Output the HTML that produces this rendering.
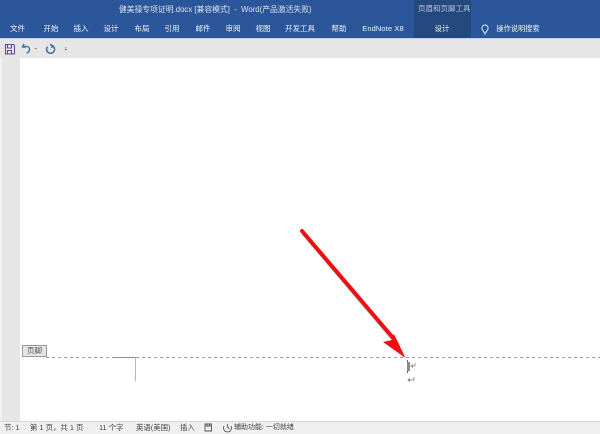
<!DOCTYPE html>
<html lang="zh">
<head>
<meta charset="utf-8">
<style>
html,body{margin:0;padding:0;background:#fff}
#p{position:relative;width:600px;height:434px;overflow:hidden;background:#fff;font-family:"Liberation Sans","Noto Sans CJK SC",sans-serif;filter:blur(.35px)}
#p div,#p span{position:absolute;white-space:nowrap}
.t{top:23px;font-size:7.5px;line-height:11px;color:#edf1f8;transform:translateX(-50%)}
.s{top:422px;font-size:7.4px;line-height:11px;color:#444}
</style>
</head>
<body>
<div id="p">
<div style="left:0;top:0;width:600px;height:38px;background:#2b579a"></div>
<div style="left:414px;top:0;width:57px;height:38px;background:#24497f"></div>
<div style="left:0;top:38px;width:600px;height:1px;background:#c6d2e4"></div>
<div style="left:119px;top:4px;font-size:7.8px;line-height:12px;color:#dbe3f0">健美操专项证明.docx [兼容模式]&nbsp; - &nbsp;Word(产品激活失败)</div>
<div style="left:418px;top:3px;font-size:7.5px;line-height:12px;color:#b9c8de">页眉和页脚工具</div>
<span class="t" style="left:17.500px">文件</span>
<span class="t" style="left:51px">开始</span>
<span class="t" style="left:81px">插入</span>
<span class="t" style="left:111px">设计</span>
<span class="t" style="left:142px">布局</span>
<span class="t" style="left:172px">引用</span>
<span class="t" style="left:203px">邮件</span>
<span class="t" style="left:233px">审阅</span>
<span class="t" style="left:263px">视图</span>
<span class="t" style="left:300px">开发工具</span>
<span class="t" style="left:339px">帮助</span>
<span class="t" style="left:383px;letter-spacing:.1px">EndNote X8</span>
<span class="t" style="left:442px">设计</span>
<span class="t" style="left:518px;font-size:7.2px">操作说明搜索</span>
<svg style="position:absolute;left:480px;top:24px" width="10" height="12" viewBox="0 0 10 12"><path d="M5 1a3.200 3.200 0 0 0-2 5.600c.5.500.7 1 .7 1.600h2.600c0-.6.2-1.100.7-1.600A3.200 3.200 0 0 0 5 1zM4 10h2" fill="none" stroke="#dfe7f2" stroke-width="1"/></svg>

<div style="left:0;top:39px;width:600px;height:19px;background:#e6e6e6"></div>
<svg style="position:absolute;left:0;top:39px" width="80" height="19" viewBox="0 0 80 19">
<path d="M5.500 5.500h8l1 1v8.500h-9zM7.500 6v3h4V6M7.500 15v-3.500h4V15" fill="none" stroke="#6b4a9c" stroke-width="1.100"/>
<path d="M24 5l-1.500 2.800 3 .8M23 8c3-1.500 7-.5 6.500 3 -.2 1.500-1.500 2.800-3 3" fill="none" stroke="#3f6ea8" stroke-width="1.400"/>
<path d="M34.500 9h2.500l-1.200 1.500z" fill="#777"/>
<path d="M52 6.500a4 4 0 1 1-4.500 1.200M50 5.500l2.500 1-.8 2.500" fill="none" stroke="#3f6ea8" stroke-width="1.500"/>
<path d="M64.500 8.500h2.500M64.500 10h2.500l-1.200 1.500z" fill="#777" stroke="#888" stroke-width=".4"/>
</svg>

<div style="left:0;top:58px;width:20px;height:363px;background:#e6e6e6"></div>
<div style="left:0;top:58px;width:2px;height:363px;background:#f3f3f3"></div>

<div style="left:22px;top:345px;width:23px;height:10px;background:#e4e4e4;border:1px solid #9a9a9a;font-size:7.5px;line-height:10px;color:#555;text-align:center">页脚</div>
<svg style="position:absolute;left:46px;top:356px" width="554" height="3"><path d="M0 1.500H554" stroke="#a0a0a0" stroke-width="1" stroke-dasharray="3.200 2.800"/></svg>
<div style="left:114px;top:357px;width:22px;height:1px;background:#8c8c8c"></div>
<div style="left:135px;top:357px;width:1px;height:24px;background:#b5b5b5"></div>

<svg style="position:absolute;left:290px;top:220px" width="150" height="170" viewBox="0 0 150 170">
<path d="M13 13 L108 125" stroke="#777" stroke-width="4" opacity=".4" fill="none"/>
<path d="M12 11 L104 119" stroke="#ee0f14" stroke-width="4" stroke-linecap="round" fill="none"/>
<path d="M115.500 138 L93 122 L102 120 L104 114 Z" fill="#f00c10"/>
<path d="M117.500 140V153" stroke="#666" stroke-width="1"/>
<rect x="117" y="142" width="3" height="9" fill="#8a8a8a"/>
<path d="M125 143v3h-4M123 144.500l-2 1.500 2 1.500" fill="none" stroke="#888" stroke-width=".8"/>
<path d="M124 157v3h-6M120 158.500l-2 1.500 2 1.500" fill="none" stroke="#777" stroke-width=".8"/>
</svg>

<div style="left:0;top:421px;width:600px;height:13px;background:#f0f0f0"></div>
<div style="left:0;top:421px;width:600px;height:1px;background:#d8d8d8"></div>
<span class="s" style="left:4px">节: 1</span>
<span class="s" style="left:30px">第 1 页，共 1 页</span>
<span class="s" style="left:99px">11 个字</span>
<span class="s" style="left:136px">英语(美国)</span>
<span class="s" style="left:180px">插入</span>
<svg style="position:absolute;left:204px;top:423px" width="9" height="9" viewBox="0 0 9 9"><path d="M1 1h6.500v7H1zM1 3h6.500M3 1v2M5.500 1v2" fill="none" stroke="#555" stroke-width=".9"/></svg>
<svg style="position:absolute;left:222px;top:423px" width="11" height="10" viewBox="0 0 11 10"><path d="M2 3a4 4 0 1 0 7 0M5.500 1v3l2 2" fill="none" stroke="#555" stroke-width=".9"/></svg>
<span class="s" style="left:234px;font-size:7px">辅助功能: 一切就绪</span>
</div>
</body>
</html>
